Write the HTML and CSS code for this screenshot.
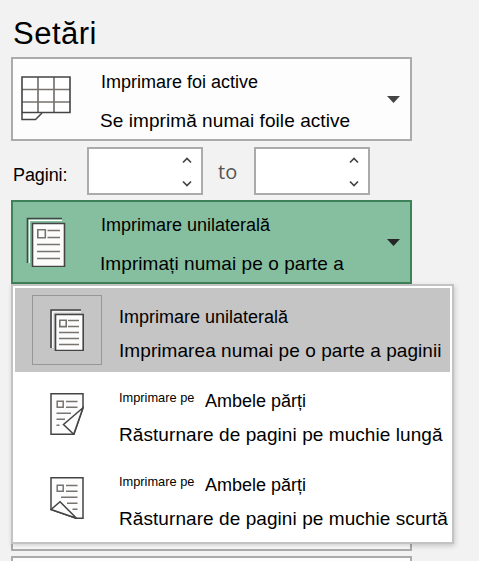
FILE: index.html
```html
<!DOCTYPE html>
<html lang="ro">
<head>
<meta charset="utf-8">
<title>Setări</title>
<link rel="stylesheet" href="styles.css">
</head>
<body>
<main class="panel">
  <h1>Setări</h1>
  <section class="select">
    <svg class="icon sheet" width="50" height="46" viewBox="0 0 50 46">
      <path d="M1 37v6.5h13.5L21 37" fill="#fff" stroke="#444" stroke-width="1.5"/>
      <path d="M1 1h48v35.5H1z" fill="#fff"/>
      <path d="M17 1v35M33 1v35M1 13.5h48M1 26h48" stroke="#777470" stroke-width="1.7"/>
      <path d="M1 1h48v35.5H1z" fill="none" stroke="#444" stroke-width="1.6"/>
    </svg>
    <div class="copy"><div class="title">Imprimare foi active</div><div class="detail">Se imprimă numai foile active</div></div>
    <svg class="arrow" width="13" height="7" viewBox="0 0 13 7"><path d="M0 0h13L6.5 7z"/></svg>
  </section>
  <div class="range">
    <label>Pagini:</label>
    <div class="number"><svg width="10" height="30" viewBox="0 0 10 30"><path d="M1 5.5l4-4 4 4M1 24.5l4 4 4-4"/></svg></div>
    <span class="to">to</span>
    <div class="number"><svg width="10" height="30" viewBox="0 0 10 30"><path d="M1 5.5l4-4 4 4M1 24.5l4 4 4-4"/></svg></div>
  </div>
  <section class="select open">
    <svg class="icon stack" width="40" height="50" viewBox="0 0 40 50">
      <path d="M1.5 46V1.5H36" fill="none" stroke="#444" stroke-width="1.6"/>
      <path d="M3.3 46V3.3H36" fill="none" stroke="#fff" stroke-width="1.2"/>
      <path d="M6.5 6.5h32v43h-32z" fill="#fcfcfc" stroke="#444" stroke-width="1.6"/>
      <path d="M11.8 12.8h7.5v8h-7.5zM21.5 13.5H34M21.5 20.5H34M11 27.5h23M11 34.5h23M11 41.5h23" fill="none" stroke="#777470" stroke-width="1.6"/>
    </svg>
    <div class="copy"><div class="title">Imprimare unilaterală</div><div class="detail">Imprimați numai pe o parte a</div></div>
    <svg class="arrow" width="13" height="7" viewBox="0 0 13 7"><path d="M0 0h13L6.5 7z"/></svg>
    <div class="menu">
      <div class="option selected">
        <div class="frame"><svg width="34" height="42" viewBox="0 0 34 42">
          <path d="M1 39V1H31" fill="none" stroke="#444" stroke-width="1.6"/>
          <path d="M2.8 39V2.8H31" fill="none" stroke="#fff" stroke-width="1.3"/>
          <path d="M5.5 5.5h27.7v36H5.5z" fill="#fcfcfc" stroke="#444" stroke-width="1.6"/>
          <path d="M9.8 11.2h6.4v6.4H9.8zM18 11.5h11M18 17.5h11M9 23.5h20M9 29.5h20M9 35.5h20" fill="none" stroke="#777470" stroke-width="1.6"/>
        </svg></div>
        <div class="copy"><div class="title">Imprimare unilaterală</div><div class="detail">Imprimarea numai pe o parte a paginii</div></div>
      </div>
      <div class="option">
        <div class="frame"><svg width="34" height="42" viewBox="0 0 34 42">
          <path d="M1 .8h32v14L24 41.2H1z" fill="#fcfcfc" stroke="#444" stroke-width="1.5"/>
          <path d="M7.2 8.2h6v6h-6zM16 8.5h11.5M16 14.2h11.5M6.5 20.2H21M6.5 26.2H15M6.5 32.2H9.5" fill="none" stroke="#777470" stroke-width="1.5"/>
          <path d="M33 14.8L13.5 31.5l10.2 9.7z" fill="#fcfcfc" stroke="#444" stroke-width="1.5"/>
        </svg></div>
        <div class="copy"><div class="title"><small>Imprimare pe</small><span>Ambele părți</span></div><div class="detail">Răsturnare de pagini pe muchie lungă</div></div>
      </div>
      <div class="option">
        <div class="frame"><svg width="34" height="42" viewBox="0 0 34 42">
          <path d="M1 .8h32v40.4h-7L1 32.5z" fill="#fcfcfc" stroke="#444" stroke-width="1.5"/>
          <path d="M7.2 8.2h6v6h-6zM16 8.5h11.5M16 14.2h11.5M11 20.2h16.5M17 26.2h10.5M22.5 32.2h5" fill="none" stroke="#777470" stroke-width="1.5"/>
          <path d="M1 32.5L10 24.8l16.5 16.4z" fill="#fcfcfc" stroke="#444" stroke-width="1.5"/>
        </svg></div>
        <div class="copy"><div class="title"><small>Imprimare pe</small><span>Ambele părți</span></div><div class="detail">Răsturnare de pagini pe muchie scurtă</div></div>
      </div>
    </div>
  </section>
  <section class="select"></section>
  <section class="select"></section>
  <section class="select"></section>
  <section class="select cut"></section>
</main>
</body>
</html>
```

FILE: styles.css
```css
* { box-sizing: border-box; }
body {
  margin: 0;
  height: 561px;
  overflow: hidden;
  background: #f2f2f2;
  color: #000;
  font-family: "Liberation Sans", Arial, sans-serif;
}
svg { display: block; flex: none; }
.panel {
  display: flex;
  flex-direction: column;
  gap: 5px;
  width: 401px;
  margin-left: 11px;
}
h1 {
  height: 52px;
  margin: 0;
  padding: 16px 0 0 2px;
  font-size: 31px;
  letter-spacing: .5px;
  font-weight: 400;
  line-height: 36px;
}
.select {
  position: relative;
  display: flex;
  flex: none;
  height: 84px;
  border: 2px solid #ababab;
  background: #fdfdfd;
}
.cut { height: 5px; border-bottom: 0; }
.icon { margin-left: 8px; }
.sheet { margin-top: 17px; }
.stack { margin: 15px 5px 0 13px; }
.select > .copy { padding: 11px 0 0 29px; }
.select > .copy .title { padding-left: 1px; }
.copy { white-space: nowrap; }
.title { height: 24px; font-size: 18px; line-height: 24px; }
.detail {
  margin-top: 15px;
  font-size: 19px;
  letter-spacing: .07px;
  line-height: 24px;
}
.arrow { margin: 37px 10px 0 auto; fill: #444; }
.open { border-color: #3f8159; background: #86bfa0; }
.open .arrow { fill: #262626; }
.range {
  display: flex;
  height: 48px;
  margin-top: 1px;
}
.range label {
  width: 76px;
  padding: 16px 0 0 2px;
  font-size: 18px;
  letter-spacing: -.1px;
  line-height: 24px;
}
.number {
  display: flex;
  justify-content: flex-end;
  width: 116px;
  padding: 8px 9px 0 0;
  border: 2px solid #ababab;
  background: #fff;
}
.number path { fill: none; stroke: #444; stroke-width: 1.7; }
.to {
  width: 51px;
  padding-left: 15px;
  color: #555;
  font: 20px/50px "Open Sans", sans-serif;
}
.menu {
  position: absolute;
  z-index: 2;
  top: 82px;
  left: -2px;
  width: 443px;
  height: 260px;
  padding: 2px;
  border: 2px solid #c3c3c3;
  background: #fff;
  box-shadow: 1px 2px 5px rgba(0, 0, 0, .18);
}
.option { display: flex; height: 84px; }
.selected { background: #c5c5c5; }
.frame {
  width: 70px;
  height: 70px;
  margin: 7px 0 0 17px;
  padding: 13px 0 0 17px;
  border: 1px solid transparent;
}
.selected .frame { border-color: #979797; }
.option .copy { padding: 17px 0 0 17px; }
.option .detail { margin-top: 10px; }
.title small {
  display: inline-block;
  width: 86px;
  font-size: 12.8px;
  line-height: 12px;
  vertical-align: 5px;
}
```
